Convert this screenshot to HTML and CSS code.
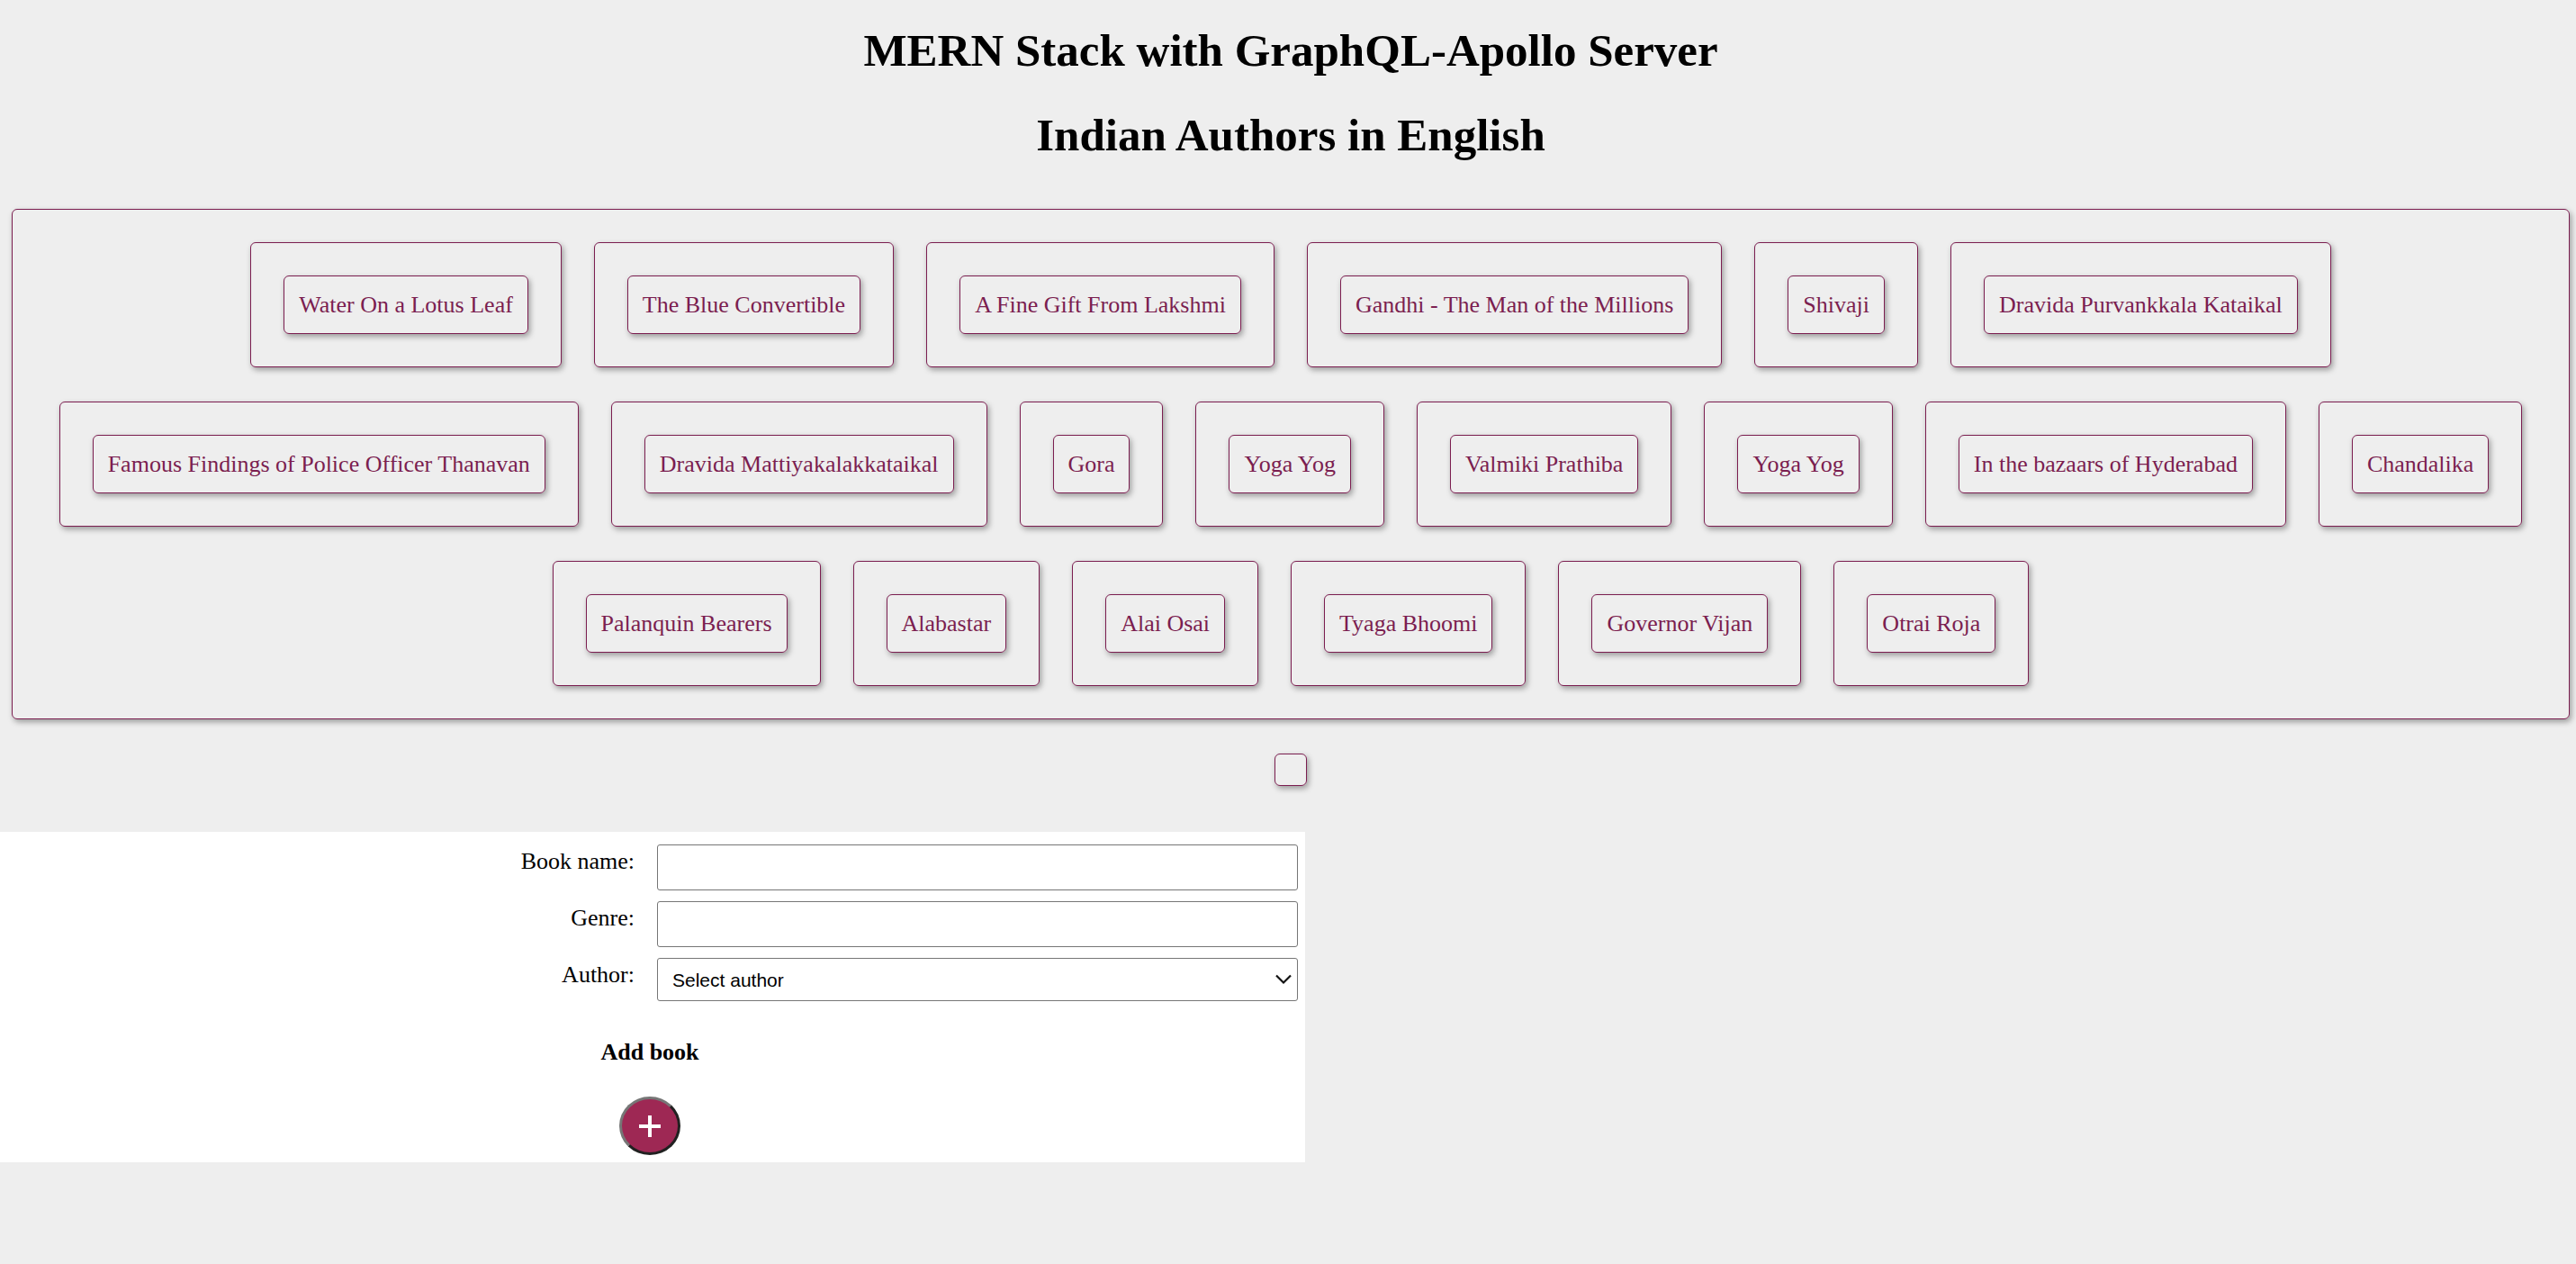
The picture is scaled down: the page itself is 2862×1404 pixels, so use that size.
FILE: index.html
```html
<!DOCTYPE html>
<html lang="en">
<head>
<meta charset="utf-8">
<meta name="viewport" content="width=device-width, initial-scale=1">
<title>MERN Stack with GraphQL-Apollo Server</title>
<link rel="stylesheet" href="styles.css">
</head>
<body>
<main class="page">
  <h1 class="title">MERN Stack with GraphQL-Apollo Server</h1>
  <h1 class="title">Indian Authors in English</h1>
  <ul class="panel books">
    <li class="panel card"><span class="panel name">Water On a Lotus Leaf</span></li>
    <li class="panel card"><span class="panel name">The Blue Convertible</span></li>
    <li class="panel card"><span class="panel name">A Fine Gift From Lakshmi</span></li>
    <li class="panel card"><span class="panel name">Gandhi - The Man of the Millions</span></li>
    <li class="panel card"><span class="panel name">Shivaji</span></li>
    <li class="panel card"><span class="panel name">Dravida Purvankkala Kataikal</span></li>
    <li class="panel card"><span class="panel name">Famous Findings of Police Officer Thanavan</span></li>
    <li class="panel card"><span class="panel name">Dravida Mattiyakalakkataikal</span></li>
    <li class="panel card"><span class="panel name">Gora</span></li>
    <li class="panel card"><span class="panel name">Yoga Yog</span></li>
    <li class="panel card"><span class="panel name">Valmiki Prathiba</span></li>
    <li class="panel card"><span class="panel name">Yoga Yog</span></li>
    <li class="panel card"><span class="panel name">In the bazaars of Hyderabad</span></li>
    <li class="panel card"><span class="panel name">Chandalika</span></li>
    <li class="panel card"><span class="panel name">Palanquin Bearers</span></li>
    <li class="panel card"><span class="panel name">Alabastar</span></li>
    <li class="panel card"><span class="panel name">Alai Osai</span></li>
    <li class="panel card"><span class="panel name">Tyaga Bhoomi</span></li>
    <li class="panel card"><span class="panel name">Governor Vijan</span></li>
    <li class="panel card"><span class="panel name">Otrai Roja</span></li>
  </ul>
  <div class="panel details"></div>
</main>
<form class="add-book">
  <div class="fields">
    <label class="label" for="book-name">Book name:</label>
    <input class="control" id="book-name" type="text">
    <label class="label" for="genre">Genre:</label>
    <input class="control" id="genre" type="text">
    <label class="label" for="author">Author:</label>
    <div class="select-wrap">
      <select class="control select" id="author"><option>Select author</option></select>
      <svg class="chevron" width="18" height="12" viewBox="0 0 18 12" aria-hidden="true"><path d="M1 1.5 9 9.5 17 1.5" fill="none" stroke="#111" stroke-width="2.2"/></svg>
    </div>
  </div>
  <h4 class="caption">Add book</h4>
  <button class="submit" type="button" aria-label="Add book">
    <svg width="24" height="24" viewBox="0 0 24 24" aria-hidden="true"><path d="M12 0v24M0 12h24" stroke="#fff" stroke-width="4"/></svg>
  </button>
</form>
</body>
</html>
```
FILE: styles.css
```css
* {
  box-sizing: border-box;
}

body {
  margin: 0;
  background: #eee;
  color: #000;
  font: 26px/29px "Liberation Serif", "Times New Roman", serif;
}

.page {
  display: flex;
  flex-direction: column;
  align-items: center;
  padding: 26px 7px 0 13px;
}

.title {
  margin: 0 0 34px;
  font-size: 51px;
  line-height: 60px;
  text-align: center;
}

.panel {
  border: 1px solid #7b1e50;
  border-radius: 6px;
  box-shadow: 2px 3px 6px rgba(0, 0, 0, 0.35);
}

.books {
  display: flex;
  flex-wrap: wrap;
  justify-content: center;
  gap: 38px 36px;
  width: 100%;
  margin: 18px 0 38px;
  padding: 36px;
  list-style: none;
}

.card {
  display: flex;
  padding: 36px;
}

.name {
  padding: 17px 16px;
  color: #7b1e50;
}

.details {
  padding: 17px;
}

.add-book {
  display: flex;
  flex-direction: column;
  align-items: center;
  width: calc(50% + 19px);
  margin-top: 51px;
  padding: 14px 8px 8px 2px;
  background: #fff;
}

.fields {
  display: grid;
  grid-template-columns: 1fr 1fr;
  gap: 12px 16px;
  width: 100%;
}

.label {
  padding: 4px 9px 0 0;
  text-align: right;
}

.control {
  width: 100%;
  height: 51px;
  margin: 0;
  padding: 0 16px;
  border: 1px solid #767676;
  border-radius: 3px;
  background: #fff;
  color: #000;
  font: 21px "Liberation Sans", Arial, sans-serif;
}

.select-wrap {
  display: grid;
  align-items: center;
}

.select {
  grid-area: 1 / 1;
  height: 48px;
  appearance: none;
}

.chevron {
  grid-area: 1 / 1;
  justify-self: end;
  margin-right: 7px;
  pointer-events: none;
}

.caption {
  margin: 42px 0 35px;
}

.submit {
  display: grid;
  place-items: center;
  width: 68px;
  height: 65px;
  padding: 0;
  border: 3px solid;
  border-color: #767676 #212121 #212121 #767676;
  border-radius: 50%;
  background: #9e2854;
}
```
